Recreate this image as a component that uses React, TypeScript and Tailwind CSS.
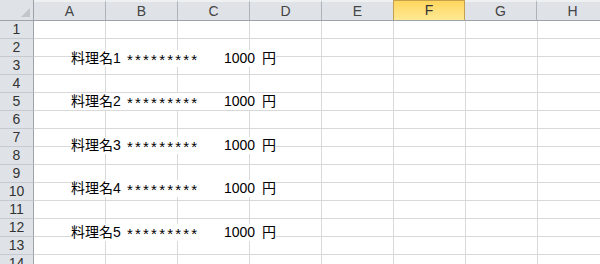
import React from 'react';

const columns = ['A', 'B', 'C', 'D', 'E', 'F', 'G', 'H'];
const rows = Array.from({ length: 14 }, (_, i) => i + 1);

const items = [
  { name: '料理名1', top: 'top-[50px]' },
  { name: '料理名2', top: 'top-[93px]' },
  { name: '料理名3', top: 'top-[137px]' },
  { name: '料理名4', top: 'top-[180px]' },
  { name: '料理名5', top: 'top-[224px]' },
];

const App: React.FC = () => {
  return (
    <div
      className="relative w-[600px] h-[264px] overflow-hidden bg-white"
      style={{ fontFamily: '"Liberation Sans", "Noto Sans CJK JP", sans-serif' }}
    >
      {/* column headers */}
      <div className="flex h-[21px] border-b border-[#9ea3a9] bg-[#dfe3e8]">
        <div className="relative w-[34px] shrink-0 border-r border-[#9ea3a9]">
          <div className="absolute right-[3px] bottom-[3px] w-0 h-0 border-l-[9px] border-l-transparent border-b-[9px] border-b-[#c2c6cb]" />
        </div>
        {columns.map((c) =>
          c === 'F' ? (
            <div
              key={c}
              className="w-[72px] shrink-0 flex items-center justify-center border-x border-t border-[#c4a14e] bg-gradient-to-b from-[#ffd65c] to-[#ffe994] text-[14px] text-[#333] -ml-px"
            >
              {c}
            </div>
          ) : (
            <div
              key={c}
              className="w-[72px] shrink-0 flex items-center justify-center border-r border-[#aeb3b9] border-t-2 border-t-[#eef0f2] text-[14px] text-[#444]"
            >
              {c}
            </div>
          )
        )}
      </div>

      {/* rows */}
      {rows.map((r) => (
        <div key={r} className="flex h-[18px]">
          <div className="w-[34px] shrink-0 flex items-center justify-center bg-[#dfe3e8] border-r border-r-[#9ea3a9] border-b border-b-[#c5cad0] text-[14px] text-[#333]">
            {r}
          </div>
          {columns.map((c) => (
            <div key={c} className="w-[72px] shrink-0 border-r border-b border-[#d9d9d9]" />
          ))}
        </div>
      ))}

      {/* text lines */}
      {items.map((it) => (
        <div
          key={it.name}
          className={`absolute left-[71px] ${it.top} h-[17px] flex items-center bg-white text-[14px] leading-[17px] text-black`}
        >
          <span className="w-[56px]">{it.name}</span>
          <span className="w-[97px] text-[15px] tracking-[2.2px] translate-y-[1px]">*********</span>
          <span className="w-[38px]">1000</span>
          <span>円</span>
        </div>
      ))}
    </div>
  );
};

export default App;
